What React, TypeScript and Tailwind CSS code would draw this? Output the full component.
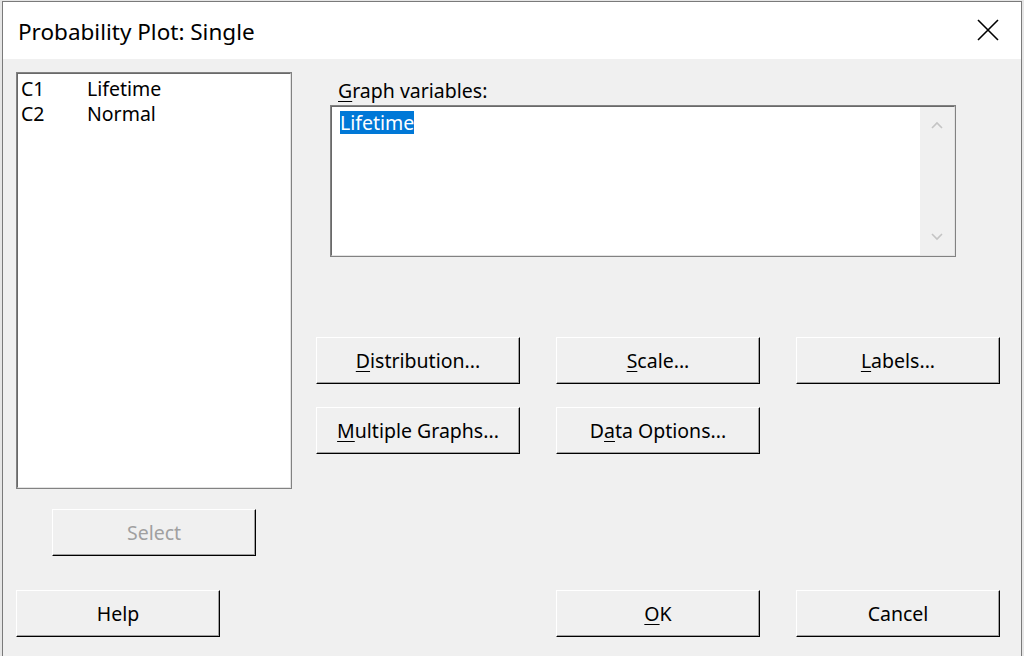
import React from 'react';

const font = { fontFamily: '"Noto Sans", "Open Sans", sans-serif' };

function Btn({ children, disabled }: { children: React.ReactNode; disabled?: boolean }) {
  return (
    <button
      className={`w-[204px] h-[47px] bg-[#f0f0f0] border border-t-white border-l-white border-b-black border-r-black shadow-[inset_-1px_-1px_0_#a0a0a0] text-[19.5px] ${
        disabled ? 'text-[#a0a0a0]' : 'text-black'
      }`}
    >
      {children}
    </button>
  );
}

function Key({ children }: { children: React.ReactNode }) {
  return <span className="underline underline-offset-[3px] decoration-1">{children}</span>;
}

export default function App() {
  return (
    <div className="w-[1024px] h-[656px] overflow-hidden bg-[#e6e6e6] pl-[2px] pt-[1px]" style={font}>
      <div className="w-[1020px] h-[680px] border-l border-t border-r border-[#7a7a7a] flex flex-col">
        {/* title bar */}
        <div className="h-[57px] bg-white flex items-center justify-between pl-[15px] pr-[22px] pt-[3px]">
          <span className="text-[22.5px] text-black">Probability Plot: Single</span>
          <svg width="22" height="22" viewBox="0 0 22 22" className="-mt-[4px]">
            <path d="M1 1L21 21M21 1L1 21" stroke="#000" strokeWidth="1.6" />
          </svg>
        </div>

        {/* body */}
        <div className="flex-1 bg-[#f0f0f0] pl-[13px]">
          <div className="flex pt-[13px]">
            {/* variable list */}
            <div className="flex flex-col">
              <div className="w-[276px] h-[417px] border border-[#828282] bg-white">
                <div className="h-full border-t border-l border-[#696969] border-b-[#e3e3e3] border-r-[#e3e3e3] border-b border-r pt-[2px] text-[19.5px] leading-[25px]">
                  <div className="flex">
                    <span className="w-[69px] pl-[3px]">C1</span>
                    <span>Lifetime</span>
                  </div>
                  <div className="flex">
                    <span className="w-[69px] pl-[3px]">C2</span>
                    <span>Normal</span>
                  </div>
                </div>
              </div>
              <div className="mt-[20px] ml-[36px]">
                <Btn disabled>Select</Btn>
              </div>
            </div>

            {/* right side */}
            <div className="ml-[24px] flex flex-col">
              <div className="ml-[22px] text-[19.5px] leading-[28px] mt-[5px]">
                <Key>G</Key>raph variables:
              </div>
              <div className="ml-[14px] w-[626px] h-[152px] border border-[#828282] bg-white">
                <div className="h-full flex border-t border-l border-[#696969] border-b border-r border-b-[#e3e3e3] border-r-[#e3e3e3]">
                  <div className="flex-1 pt-[4px] pl-[8px]">
                    <span className="bg-[#0078d7] text-white text-[19.5px] leading-[23px] inline-block">Lifetime</span>
                  </div>
                  <div className="w-[34px] bg-[#f0f0f0] flex flex-col items-center justify-between py-[14px]">
                    <svg width="12" height="8" viewBox="0 0 12 8">
                      <path d="M1 7L6 2L11 7" stroke="#c4c4c4" strokeWidth="1.6" fill="none" />
                    </svg>
                    <svg width="12" height="8" viewBox="0 0 12 8">
                      <path d="M1 1L6 6L11 1" stroke="#c4c4c4" strokeWidth="1.6" fill="none" />
                    </svg>
                  </div>
                </div>
              </div>

              <div className="mt-[80px] flex gap-[36px]">
                <Btn>
                  <Key>D</Key>istribution...
                </Btn>
                <Btn>
                  <Key>S</Key>cale...
                </Btn>
                <Btn>
                  <Key>L</Key>abels...
                </Btn>
              </div>
              <div className="mt-[23px] flex gap-[36px]">
                <Btn>
                  <Key>M</Key>ultiple Graphs...
                </Btn>
                <Btn>
                  D<Key>a</Key>ta Options...
                </Btn>
              </div>
            </div>
          </div>

          {/* bottom row */}
          <div className="mt-[34px] flex">
            <Btn>Help</Btn>
            <div className="ml-[336px] flex gap-[36px]">
              <Btn>
                <Key>O</Key>K
              </Btn>
              <Btn>Cancel</Btn>
            </div>
          </div>
        </div>
      </div>
    </div>
  );
}
